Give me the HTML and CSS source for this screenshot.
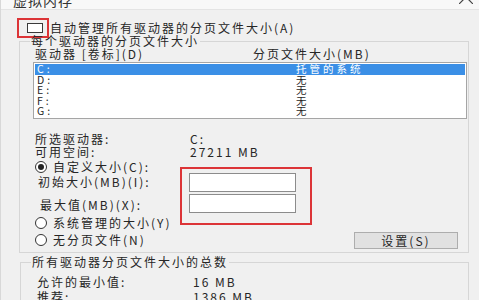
FILE: index.html
```html
<!DOCTYPE html>
<html lang="zh-CN">
<head>
  <meta charset="UTF-8">
  <title>虚拟内存</title>
  <link rel="stylesheet" href="styles.css">
</head>
<body>
  <div class="window">
    <div class="titlebar">
      <span class="title">虚拟内存</span>
      <svg class="close" width="14" height="14" viewBox="0 0 14 14"><path d="M0 0L14 14M14 0L0 14" stroke="#444" stroke-width="1.2" fill="none"/></svg>
    </div>
    <div class="auto">
      <span class="mark"><span class="check"></span></span>
      <span class="autoText">自动管理所有驱动器的分页文件大小(A)</span>
    </div>
    <div class="group paging">
      <div class="legend">每个驱动器的分页文件大小</div>
      <div class="head">
        <span class="hc1">驱动器 [卷标](D)</span>
        <span>分页文件大小(MB)</span>
      </div>
      <ul class="drives">
        <li class="sel"><span class="dc1">C:</span><span>托管的系统</span></li>
        <li><span class="dc1">D:</span><span>无</span></li>
        <li><span class="dc1">E:</span><span>无</span></li>
        <li><span class="dc1">F:</span><span>无</span></li>
        <li><span class="dc1">G:</span><span>无</span></li>
      </ul>
      <div class="info first"><span class="key">所选驱动器:</span><span>C:</span></div>
      <div class="info"><span class="key">可用空间:</span><span>27211 MB</span></div>
      <div class="radio custom"><span class="dot on"></span><span>自定义大小(C):</span></div>
      <div class="sizes">
        <div class="labels">
          <p>初始大小(MB)(I):</p>
          <p class="max">最大值(MB)(X):</p>
        </div>
        <div class="frame">
          <div class="field"></div>
          <div class="field"></div>
        </div>
      </div>
      <div class="radio sys"><span class="dot"></span><span>系统管理的大小(Y)</span></div>
      <div class="lastRow">
        <div class="radio"><span class="dot"></span><span>无分页文件(N)</span></div>
        <div class="btn">设置(S)</div>
      </div>
    </div>
    <div class="group total">
      <div class="legend">所有驱动器分页文件大小的总数</div>
      <div class="info t1"><span class="key2">允许的最小值:</span><span>16 MB</span></div>
      <div class="info"><span class="key2">推荐:</span><span>1386 MB</span></div>
    </div>
  </div>
</body>
</html>
```

FILE: styles.css
```css
* {
  padding: 0;
  margin: 0;
  box-sizing: border-box;
}
body {
  width: 479px;
  height: 300px;
  overflow: hidden;
  background: #f0f0f0;
  font-family: "Noto Sans CJK SC", "Noto Sans", sans-serif;
  font-size: 12px;
  line-height: 14px;
  letter-spacing: 2px;
  color: #262626;
}
.window {
  width: 479px;
  height: 300px;
  border-left: 1px solid #d8d8d8;
}
.titlebar {
  height: 10px;
  overflow: hidden;
  display: flex;
  justify-content: space-between;
  padding: 0 6px 0 12px;
  background: #f8f8f8;
  border-bottom: 1px solid #e4e4e4;
}
.titlebar .title {
  font-size: 14px;
  line-height: 14px;
  letter-spacing: 1px;
  margin-top: -7px;
  color: #333;
}
.titlebar .close {
  margin-top: -10px;
}

.auto {
  display: flex;
  align-items: center;
  margin-top: 8px;
  height: 20px;
}
.auto .mark {
  margin-left: 16px;
  width: 32px;
  height: 20px;
  border: 2px solid #dc3437;
  padding: 3px 0 0 8px;
}
.auto .check {
  display: block;
  width: 16px;
  height: 10px;
  border: 1px solid #3a3a3a;
  background: #fff;
}
.auto .autoText {
  margin-left: 1px;
}

.group {
  border: 1px solid #d6d6d6;
  margin-left: 18px;
  width: 450px;
}
.group .legend {
  width: fit-content;
  margin: -8px 0 0 10px;
  padding: 0 1px;
  line-height: 14px;
  background: #f0f0f0;
}
.paging {
  margin-top: 3px;
  padding-bottom: 3px;
}
.head {
  display: flex;
  line-height: 12px;
  padding-left: 15px;
}
.head .hc1 {
  width: 218px;
}
.drives {
  list-style: none;
  margin: 2px 0 0 13px;
  width: 434px;
  border: 1px solid #a5a5a5;
  background: #fff;
  padding: 1px;
  font-size: 10.5px;
  letter-spacing: 3px;
}
.drives li {
  display: flex;
  height: 10.6px;
  line-height: 10.6px;
  padding-left: 2px;
}
.drives li.sel {
  background: #3b8fe6;
  color: #fff;
}
.drives .dc1 {
  width: 259px;
}
.info {
  display: flex;
  line-height: 13px;
  padding-left: 15px;
}
.info.first {
  margin-top: 13px;
}
.info .key {
  width: 155px;
}
.radio {
  display: flex;
  align-items: center;
  line-height: 14px;
  padding-left: 15px;
}
.radio .dot {
  width: 12px;
  height: 12px;
  border: 1px solid #333;
  border-radius: 50%;
  background: #fff;
  margin-right: 6px;
  display: flex;
  align-items: center;
  justify-content: center;
}
.radio .dot.on::after {
  content: '';
  width: 6px;
  height: 6px;
  border-radius: 50%;
  background: #222;
}
.radio.custom {
  margin-top: 2px;
}
.sizes {
  display: flex;
  align-items: flex-start;
}
.sizes .labels {
  width: 160px;
  padding-left: 18px;
  line-height: 16px;
}
.sizes .labels .max {
  margin-top: 7px;
  padding-left: 2px;
}
.frame {
  width: 132px;
  height: 58px;
  margin: -7px 0 -12px;
  border: 2px solid #dc3437;
  padding: 4px 0 0 7px;
}
.frame .field {
  width: 107px;
  height: 19px;
  border: 1px solid #8c8c8c;
  background: #fff;
}
.frame .field + .field {
  margin-top: 2px;
}
.radio.sys {
  margin-top: 3px;
}
.lastRow {
  display: flex;
  justify-content: space-between;
  align-items: center;
  height: 17px;
  margin-top: 2px;
}
.btn {
  width: 104px;
  height: 17px;
  margin-right: 10px;
  border: 1px solid #adadad;
  background: #e1e1e1;
  text-align: center;
  line-height: 15px;
}

.total {
  margin-top: 9px;
  margin-left: 19px;
  width: 449px;
  height: 60px;
}
.total .info {
  line-height: 15px;
  padding-left: 16px;
}
.total .info.t1 {
  margin-top: 5px;
}
.total .key2 {
  width: 156px;
}
```
